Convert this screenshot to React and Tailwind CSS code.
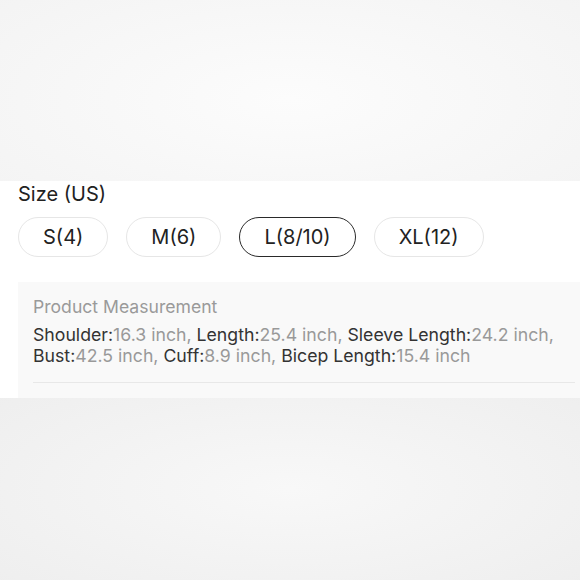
const SIZES = [
  { label: "S(4)", active: false },
  { label: "M(6)", active: false },
  { label: "L(8/10)", active: true },
  { label: "XL(12)", active: false },
];

const MEASURES = [
  ["Shoulder", "16.3 inch"],
  ["Length", "25.4 inch"],
  ["Sleeve Length", "24.2 inch"],
  ["Bust", "42.5 inch"],
  ["Cuff", "8.9 inch"],
  ["Bicep Length", "15.4 inch"],
];

export default function App() {
  return (
    <div className="w-[580px] h-[580px] flex flex-col overflow-hidden font-['Inter','Liberation_Sans',sans-serif]">
      {/* blurred backdrop, top */}
      <div className="h-[181px] bg-[radial-gradient(ellipse_70%_90%_at_50%_55%,#fcfcfc,#f3f3f3)]" />

      {/* screenshot strip */}
      <div className="h-[217px] bg-white pl-[18px] flex flex-col">
        <h2 className="text-[20px] leading-6 text-[#222] mt-[1px]">Size (US)</h2>

        <div className="flex gap-[18px] mt-[11px]">
          {SIZES.map((s) => (
            <button
              key={s.label}
              className={
                s.active
                  ? "h-[40px] px-[24px] rounded-full border-[1.5px] border-[#2a2a2a] text-[20px] text-[#222]"
                  : "h-[40px] px-[24px] rounded-full border border-[#e6e6e6] text-[20px] text-[#222]"
              }
            >
              {s.label}
            </button>
          ))}
        </div>

        <div className="mt-[25px] flex-1 bg-[#f9f9f9] pl-[15px] pt-[14px]">
          <p className="text-[17.6px] leading-[22px] text-[#9a9a9a]">Product Measurement</p>
          <p className="mt-[6px] text-[17.7px] leading-[21px] text-[#999] pr-[10px]">
            {MEASURES.map(([k, v], i) => (
              <span key={k}>
                <span className="text-[#333]">{k}:</span>
                {v}
                {i < MEASURES.length - 1 ? ", " : ""}
                {i === 2 ? <br /> : null}
              </span>
            ))}
          </p>
          <div className="mt-[16px] mr-[5px] h-px bg-[#e8e8e8]" />
        </div>
      </div>

      {/* blurred backdrop, bottom */}
      <div className="flex-1 bg-[radial-gradient(ellipse_70%_80%_at_50%_50%,#f8f8f8,#eeeeee)]" />
    </div>
  );
}
